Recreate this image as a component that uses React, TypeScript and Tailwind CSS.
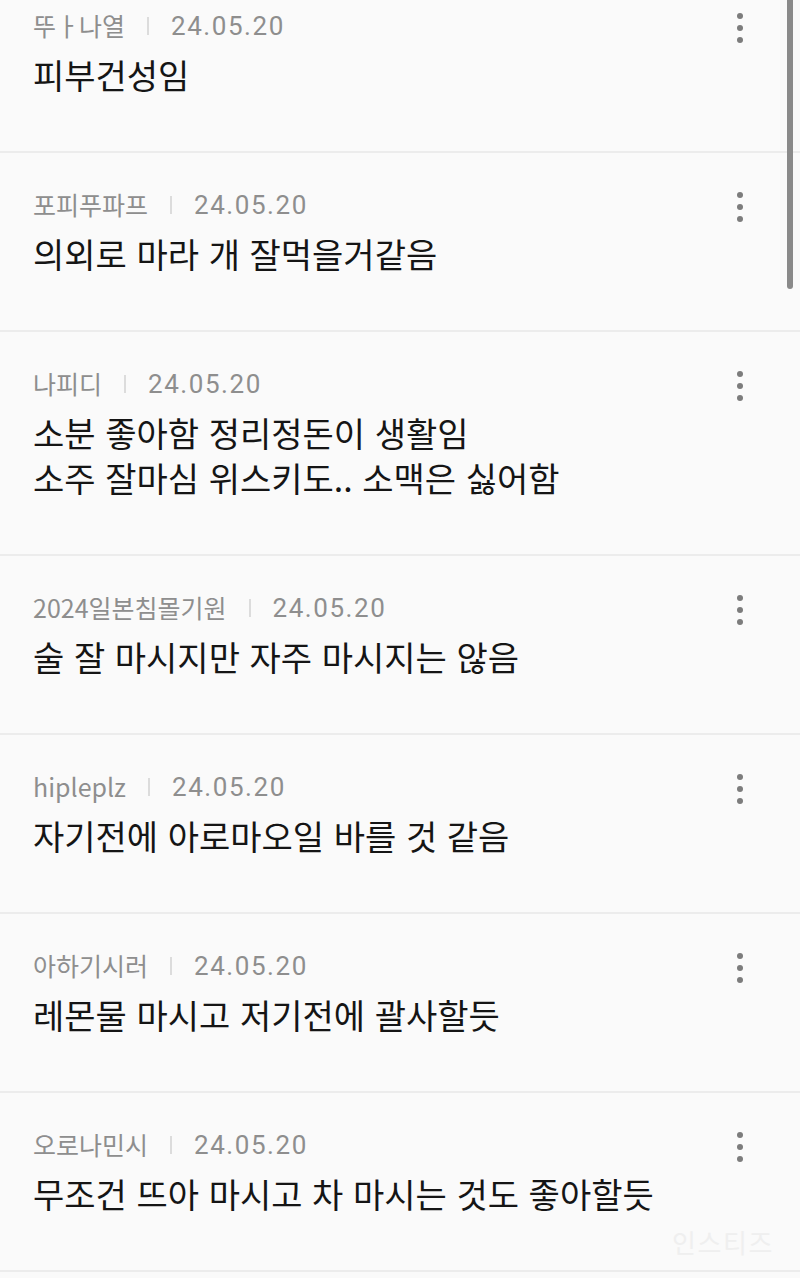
import React from "react";

type Comment = {
  name: string;
  date: string;
  lines: string[];
};

const comments: Comment[] = [
  { name: "뚜ㅏ나열", date: "24.05.20", lines: ["피부건성임"] },
  { name: "포피푸파프", date: "24.05.20", lines: ["의외로 마라 개 잘먹을거같음"] },
  { name: "나피디", date: "24.05.20", lines: ["소분 좋아함 정리정돈이 생활임", "소주 잘마심 위스키도.. 소맥은 싫어함"] },
  { name: "2024일본침몰기원", date: "24.05.20", lines: ["술 잘 마시지만 자주 마시지는 않음"] },
  { name: "hipleplz", date: "24.05.20", lines: ["자기전에 아로마오일 바를 것 같음"] },
  { name: "아하기시러", date: "24.05.20", lines: ["레몬물 마시고 저기전에 괄사할듯"] },
  { name: "오로나민시", date: "24.05.20", lines: ["무조건 뜨아 마시고 차 마시는 것도 좋아할듯"] },
  { name: "", date: "", lines: [""] },
];

const font = { fontFamily: '"Noto Sans CJK KR", "Noto Sans", sans-serif' };

// kebab menu, three grey dots
const MoreIcon = () => (
  <svg width="8" height="32" viewBox="0 0 8 32" fill="#7c7c7c">
    <circle cx="4" cy="4" r="3" />
    <circle cx="4" cy="16" r="3" />
    <circle cx="4" cy="28" r="3" />
  </svg>
);

const CommentRow = ({ item }: { item: Comment }) => {
  return (
    <div className="flex flex-row border-b-2 border-[#ececec] pl-[33px] pr-[56px]">
      <div className="flex-1 pt-[34px] pb-[54px]">
        <div className="flex h-[36px] items-center text-[25px] text-[#8e8e8e]">
          <span>{item.name}</span>
          <span className="mx-[22px] h-[18px] w-[2px] bg-[#dcdcdc]" />
          <span className="text-[26px] tracking-[0.06em]" style={{ fontFamily: 'Roboto, "Noto Sans CJK KR", sans-serif' }}>
            {item.date}
          </span>
        </div>
        <div className="mt-[8px] text-[34px] leading-[45px] text-[#151515] [word-spacing:2px]">
          {item.lines.map((line, index) => (
            <p key={index}>{line}</p>
          ))}
        </div>
      </div>
      <div className="pt-[38px]">
        <MoreIcon />
      </div>
    </div>
  );
};

const App = () => {
  return (
    <div className="relative h-[1278px] w-[800px] overflow-hidden bg-[#fafafa]" style={font}>
      <div className="-mt-[26px]">
        {comments.map((item, index) => (
          <CommentRow key={index} item={item} />
        ))}
      </div>

      {/* scroll thumb */}
      <div className="absolute left-[787px] top-0 h-[289px] w-[6px] rounded-b-full bg-[#8a8a8a]" />

      {/* watermark */}
      <div className="absolute left-[672px] top-[1222px] text-[26px] tracking-[0.06em] text-[#efefef]">인스티즈</div>
    </div>
  );
};

export default App;
